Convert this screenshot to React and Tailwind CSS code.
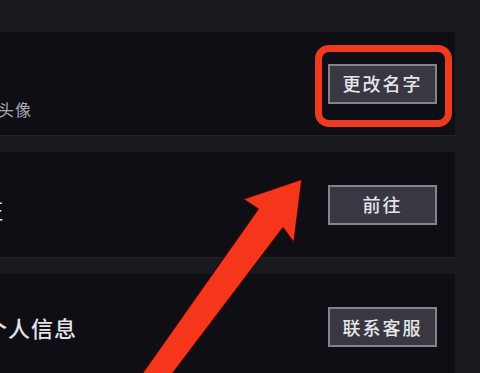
const font = { fontFamily: '"Noto Sans CJK SC", "Noto Sans", sans-serif' };

function ActionButton({ label }) {
  return (
    <button className="w-[109px] h-[40px] shrink-0 border-2 border-[#85848c] bg-[#383742] text-[#e6e6ea] text-[18px] font-medium tracking-[2px] flex items-center justify-center">
      {label}
    </button>
  );
}

export default function App() {
  return (
    <div
      className="relative w-[480px] h-[373px] overflow-hidden bg-[#1a1920] flex flex-col pt-[32px] pr-[25px] gap-[16px]"
      style={font}
    >
      {/* Row 1: avatar / name */}
      <div className="h-[104px] shrink-0 flex items-center justify-between bg-[#0f0e14] pr-[18px] border-b border-[#24232a]">
        <span className="self-end mb-[16px] -ml-[36px] text-[16px] leading-[20px] text-[#a9a8b0] tracking-[1px]">
          更换头像
        </span>
        <ActionButton label="更改名字" />
      </div>

      {/* Row 2 */}
      <div className="h-[106px] shrink-0 flex items-center justify-between bg-[#0f0e14] pr-[18px] border-b border-[#24232a]">
        <span className="mt-[10px] -ml-[85px] text-[22px] text-[#e4e4e8]">实名认证</span>
        <ActionButton label="前往" />
      </div>

      {/* Row 3 */}
      <div className="h-[106px] shrink-0 flex items-center justify-between bg-[#0f0e14] pr-[18px]">
        <span className="-ml-[15px] text-[22px] font-medium text-[#e4e4e8] tracking-[1px]">个人信息</span>
        <ActionButton label="联系客服" />
      </div>

      {/* annotation: red highlight box */}
      <div className="absolute left-[315px] top-[45px] w-[137px] h-[82px] border-[7px] border-[#f03a1f] rounded-[14px]" />

      {/* annotation: red arrow */}
      <svg className="absolute left-0 top-0" width="480" height="373" viewBox="0 0 480 373">
        <polygon
          points="302,179 294,243 283,228 164,385 134,385 258,209 243,199"
          fill="#f5361b"
          stroke="#2a0c08"
          strokeWidth="1.5"
          strokeLinejoin="round"
        />
      </svg>
    </div>
  );
}
